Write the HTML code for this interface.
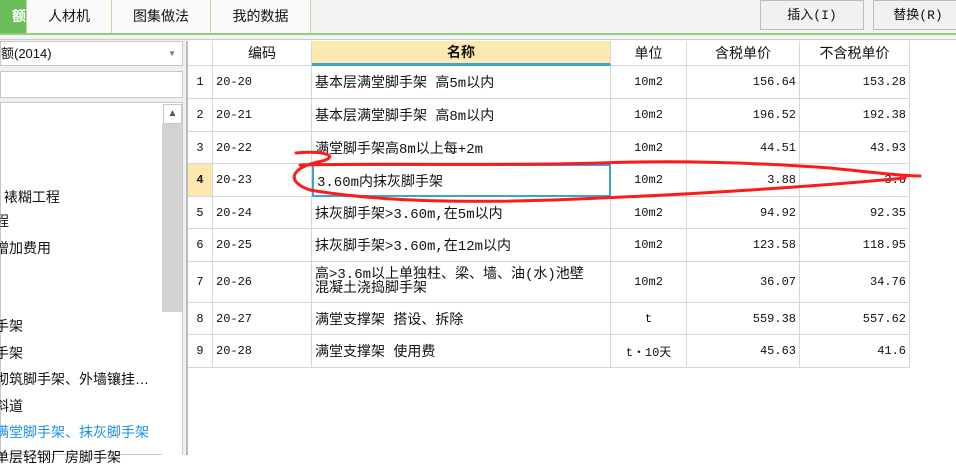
<!DOCTYPE html>
<html><head><meta charset="utf-8"><style>
*{margin:0;padding:0;box-sizing:border-box}
body{width:956px;height:455px;overflow:hidden;background:#fff;position:relative;font-family:"Liberation Sans","Noto Sans CJK SC",sans-serif;font-size:13px;color:#111}
.a{position:absolute}
.tab{position:absolute;top:0;height:33px;line-height:33px;text-align:center;font-size:14px;background:#fafafa;border-right:1px solid #b8dca8}
.btn{position:absolute;top:0;height:30px;line-height:30px;text-align:center;background:#f1f1f1;border:1px solid #bdbdbd;font-size:13px;font-family:"Liberation Mono","Noto Sans CJK SC",monospace}
.c{position:absolute;border-right:1px solid #d8d8d8;border-bottom:1px solid #d8d8d8;padding:0 3px;white-space:nowrap;display:flex;align-items:center;font-family:"Liberation Mono","Noto Sans CJK SC",monospace;font-size:12px}
.r{justify-content:flex-end}.m{justify-content:center}
.t{position:absolute;left:0;font-size:14px;white-space:nowrap}
</style></head><body>
<div class="a" style="left:0;top:0;width:956px;height:33px;background:#f3f3f3"></div>
<div class="tab" style="left:0;width:27px;background:#6cbd5a;color:#fff;font-weight:bold;text-align:right">额</div>
<div class="tab" style="left:27px;width:85px">人材机</div>
<div class="tab" style="left:112px;width:99px">图集做法</div>
<div class="tab" style="left:211px;width:100px">我的数据</div>
<div class="btn" style="left:760px;width:104px">插入(I)</div>
<div class="btn" style="left:873px;width:90px">替换(R)</div>
<div class="a" style="left:0;top:33px;width:956px;height:2px;background:#8fcf7d"></div>
<div class="a" style="left:0;top:35px;width:956px;height:5px;background:#f3f3f3;border-bottom:1px solid #ccc"></div>
<div class="a" style="left:0;top:40px;width:186px;height:415px;background:#f0f0f0"></div>
<div class="a" style="left:0;top:41px;width:183px;height:25px;background:#fff;border:1px solid #c8c8c8;line-height:23px;font-size:13px">额(2014)<span class="a" style="right:6px;top:0;font-size:8px;color:#777">▼</span></div>
<div class="a" style="left:0;top:71px;width:183px;height:27px;background:#fff;border:1px solid #c8c8c8"></div>
<div class="a" style="left:0;top:102px;width:183px;height:353px;background:#fff;border:1px solid #c8c8c8"></div>
<div class="a" style="left:162px;top:103px;width:20px;height:352px;background:#fff"></div>
<div class="a" style="left:162px;top:124px;width:20px;height:188px;background:#d2d2d2"></div>
<div class="a" style="left:163px;top:104px;width:19px;height:20px;background:#fff;border:1px solid #c8c8c8;text-align:center;font-size:10px;line-height:18px;color:#555">▲</div>
<div class="t" style="top:187px">&nbsp;裱糊工程</div>
<div class="t" style="top:211px;left:-5px">程</div>
<div class="t" style="top:238px;left:-5px">增加费用</div>
<div class="t" style="top:316px;left:-5px">手架</div>
<div class="t" style="top:343px;left:-5px">手架</div>
<div class="t" style="top:369px;left:-5px">砌筑脚手架、外墙镶挂…</div>
<div class="t" style="top:396px;left:-5px">斜道</div>
<div class="t" style="top:422px;left:-5px;color:#1e90e8">满堂脚手架、抹灰脚手架</div>
<div class="t" style="top:447px;left:-5px">单层轻钢厂房脚手架</div>
<div class="a" style="left:186px;top:41px;width:2px;height:414px;background:#bbb"></div>
<div id="g"></div>
<script>
var cols=[188,213,312,611,687,800,910];
var rows=[41,66,99,132,164,197,229,262,303,335,368];
var hd=["","编码","名称","单位","含税单价","不含税单价"];
var d=[["1","20-20","基本层满堂脚手架 高5m以内","10m2","156.64","153.28"],
["2","20-21","基本层满堂脚手架 高8m以内","10m2","196.52","192.38"],
["3","20-22","满堂脚手架高8m以上每+2m","10m2","44.51","43.93"],
["4","20-23","3.60m内抹灰脚手架","10m2","3.88","3.6"],
["5","20-24","抹灰脚手架&gt;3.60m,在5m以内","10m2","94.92","92.35"],
["6","20-25","抹灰脚手架&gt;3.60m,在12m以内","10m2","123.58","118.95"],
["7","20-26","高&gt;3.6m以上单独柱、梁、墙、油(水)池壁<br>混凝土浇捣脚手架","10m2","36.07","34.76"],
["8","20-27","满堂支撑架 搭设、拆除","t","559.38","557.62"],
["9","20-28","满堂支撑架 使用费","t・10天","45.63","41.6"]];
var h="";
for(var r=0;r<10;r++){for(var c=0;c<6;c++){
var x=cols[c],w=cols[c+1]-x,y=rows[r],hh=rows[r+1]-y;
var cls="c",st="left:"+x+"px;top:"+y+"px;width:"+w+"px;height:"+hh+"px;",txt;
if(r==0){txt=hd[c];cls+=" m";st+="font-size:14px;";if(c==2)st+="background:#fde9b0;font-weight:bold;border-bottom:3px solid #3aa3d8;";}
else{txt=d[r-1][c];if(c==0||c==3)cls+=" m";if(c>=4)cls+=" r";
if(c==2&&r!=7)st+="font-size:14px;";if(c==2&&r==7)st+="line-height:14px;font-size:14px;";
if(r==4&&c==0)st+="background:#fde9b0;font-weight:bold;";
if(r==4&&c==2)st+="border:2px solid #3aa3d8;";}
h+='<div class="'+cls+'" style="'+st+'"><span>'+txt+'</span></div>';}}
document.getElementById("g").innerHTML=h;
</script>
<svg class="a" style="left:0;top:0" width="956" height="455"><path d="M296,153 C320,150 345,156 318,162 C290,168 286,182 310,190 C380,202 480,204 600,198 C700,194 820,186 905,178 M300,165 C400,163 500,166 600,163 C680,160 760,163 830,168 C870,172 900,176 920,176" fill="none" stroke="#ff1a1a" stroke-width="3" stroke-linecap="round"/></svg>
</body></html>
